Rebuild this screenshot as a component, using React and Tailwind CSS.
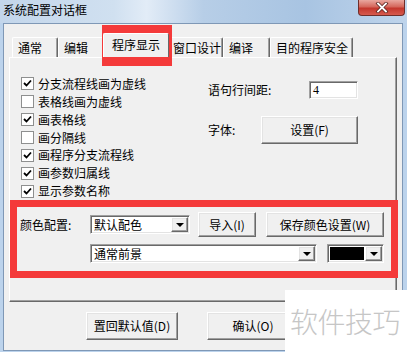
import React from 'react';

const raised =
  'border border-t-white border-l-white border-r-[#696969] border-b-[#696969] shadow-[inset_-1px_-1px_0_#a0a0a0,inset_1px_1px_0_#e3e3e3] bg-[#f0f0f0]';
const sunken =
  'border border-t-[#a0a0a0] border-l-[#a0a0a0] border-r-white border-b-white shadow-[inset_1px_1px_0_#696969,inset_-1px_-1px_0_#e3e3e3] bg-white';

const Arrow = () => (
  <div className={`${raised} w-[17px] h-full flex items-center justify-center shrink-0`}>
    <div className="w-0 h-0 border-l-[4px] border-r-[4px] border-t-[4px] border-l-transparent border-r-transparent border-t-black" />
  </div>
);

const Combo = ({ text, className }) => (
  <div className={`${sunken} ${className} flex items-stretch p-[1px]`}>
    <div className="flex-1 flex items-center pl-[2px] text-[12px] leading-none">{text}</div>
    <Arrow />
  </div>
);

const Button = ({ children, className }) => (
  <div className={`${raised} ${className} flex items-center justify-center text-[12px] leading-none`}>
    {children}
  </div>
);

const Check = ({ checked, label }) => (
  <div className="h-[18px] flex items-center gap-[4px]">
    <div className="w-[13px] h-[13px] border border-[#8e8f8f] bg-white flex items-center justify-center shrink-0">
      {checked && (
        <svg width="9" height="9" viewBox="0 0 9 9">
          <path d="M1 4 L3.5 6.5 L8 1.5" fill="none" stroke="#000" strokeWidth="1.8" />
        </svg>
      )}
    </div>
    <span className="text-[12px] leading-none">{label}</span>
  </div>
);

const tabs = [
  { label: '通常', w: 'w-[46px]' },
  { label: '编辑', w: 'w-[47px]' },
  { label: '程序显示', w: 'w-[66px]', active: true },
  { label: '窗口设计', w: 'w-[56px]' },
  { label: '编译', w: 'w-[47px]' },
  { label: '目的程序安全', w: 'w-[83px]' },
];

const checks = [
  ['分支流程线画为虚线', true],
  ['表格线画为虚线', false],
  ['画表格线', true],
  ['画分隔线', false],
  ['画程序分支流程线', true],
  ['画参数归属线', true],
  ['显示参数名称', true],
];

export default function App() {
  return (
    <div className="relative w-[407px] h-[352px] overflow-hidden bg-[#bcd3ec] flex flex-col text-black font-['Noto_Sans_CJK_SC','Noto_Sans',sans-serif]">
      {/* Title bar */}
      <div className="h-[23px] flex items-start justify-between bg-[linear-gradient(90deg,#c3d6eb_0%,#d0e0f0_28%,#e2ecf7_36%,#b7cee7_50%,#a8c4e2_75%,#bfd4eb_100%)]">
        <span className="pl-[3px] pt-[3px] text-[12px] leading-[14px]">系统配置对话框</span>
        <div className="mr-[2px] w-[47px] h-[16px] rounded-b-[4px] border border-t-0 border-[#6f2e2a] bg-[linear-gradient(180deg,#e9a79f_0%,#d5675c_45%,#c4372d_55%,#d65a4e_100%)] flex items-center justify-center">
          <svg width="14" height="11" viewBox="0 0 14 11">
            <path d="M3 1.5 L11 9.5 M11 1.5 L3 9.5" stroke="#5a2420" strokeWidth="3.4" strokeLinecap="square" />
            <path d="M3 1.5 L11 9.5 M11 1.5 L3 9.5" stroke="#fff" strokeWidth="1.8" strokeLinecap="square" />
          </svg>
        </div>
      </div>

      {/* Client */}
      <div className="flex-1 ml-[3px] mr-[4px] mb-[1px] border border-[#7f98b6] bg-[#f0f0f0] pt-[9px] px-[5px] flex flex-col">
        {/* Tabs */}
        <div className="h-[24px] flex items-end pl-[3px]">
          {tabs.map((t) =>
            t.active ? (
              <div
                key={t.label}
                className={`${t.w} -mx-[2px] h-[24px] relative z-10 bg-[#f0f0f0] border-t border-l border-white border-r border-r-[#696969] rounded-t-[2px] flex items-center pl-[8px] pb-[2px] text-[12px] leading-none`}
              >
                {t.label}
              </div>
            ) : (
              <div
                key={t.label}
                className={`${t.w} h-[20px] border-t border-l border-white border-r border-r-[#696969] shadow-[inset_-1px_0_0_#a0a0a0] rounded-t-[2px] flex items-center pl-[5px] text-[12px] leading-none`}
              >
                {t.label}
              </div>
            )
          )}
        </div>

        {/* Panel */}
        <div className="w-[388px] h-[245px] border border-t-white border-l-white border-r-[#696969] border-b-[#696969] shadow-[inset_-1px_-1px_0_#a0a0a0] flex flex-col">
          <div className="h-[142px] flex">
            <div className="w-[198px] pl-[11px] pt-[17px] flex flex-col">
              {checks.map(([label, c]) => (
                <Check key={label} label={label} checked={c} />
              ))}
            </div>
            <div className="pt-[23px] flex flex-col">
              <div className="flex items-center h-[18px]">
                <span className="w-[101px] text-[12px] leading-none">语句行间距:</span>
                <div className={`${sunken} w-[49px] h-[18px] flex items-center pl-[3px] text-[12px] leading-none font-['Liberation_Serif',serif]`}>4</div>
              </div>
              <div className="flex items-center mt-[17px]">
                <span className="w-[53px] text-[12px] leading-none">字体:</span>
                <Button className="w-[97px] h-[28px]">设置(F)</Button>
              </div>
            </div>
          </div>

          {/* Colour config, highlighted */}
          <div className="w-[388px] h-[78px] border-[7px] border-[#f43a3a] pl-[3px] pt-[5px] flex flex-col">
            <div className="flex items-center h-[25px]">
              <span className="w-[70px] text-[12px] leading-none">颜色配置:</span>
              <Combo text="默认配色" className="w-[100px] h-[19px]" />
              <Button className="ml-[8px] w-[58px] h-[25px]">导入(I)</Button>
              <Button className="ml-[10px] w-[118px] h-[25px]">保存颜色设置(W)</Button>
            </div>
            <div className="flex items-center mt-[7px] pl-[70px]">
              <Combo text="通常前景" className="w-[227px] h-[19px]" />
              <div className={`${sunken} ml-[10px] w-[57px] h-[19px] flex items-stretch p-[1px]`}>
                <div className="flex-1 p-[1px]">
                  <div className="w-full h-full bg-black" />
                </div>
                <Arrow />
              </div>
            </div>
          </div>
        </div>

        {/* Bottom buttons */}
        <div className="mt-[10px] flex pl-[77px] gap-[29px]">
          <Button className="w-[92px] h-[28px]">置回默认值(D)</Button>
          <Button className="w-[92px] h-[28px]">确认(O)</Button>
        </div>
      </div>

      {/* Selected tab highlight */}
      <div className="absolute left-[102px] top-[25px] w-[70px] h-[41px] border-t-[9px] border-l-[8px] border-r-[10px] border-b-[12px] border-[#f43a3a]" />

      {/* Watermark */}
      <div className="absolute left-[285px] top-[290px] w-[122px] h-[62px] bg-white flex items-center pl-[5px]">
        <span className="text-[28px] leading-none font-light text-[#c6c6c6] tracking-[-0.5px]">软件技巧</span>
      </div>
    </div>
  );
}
